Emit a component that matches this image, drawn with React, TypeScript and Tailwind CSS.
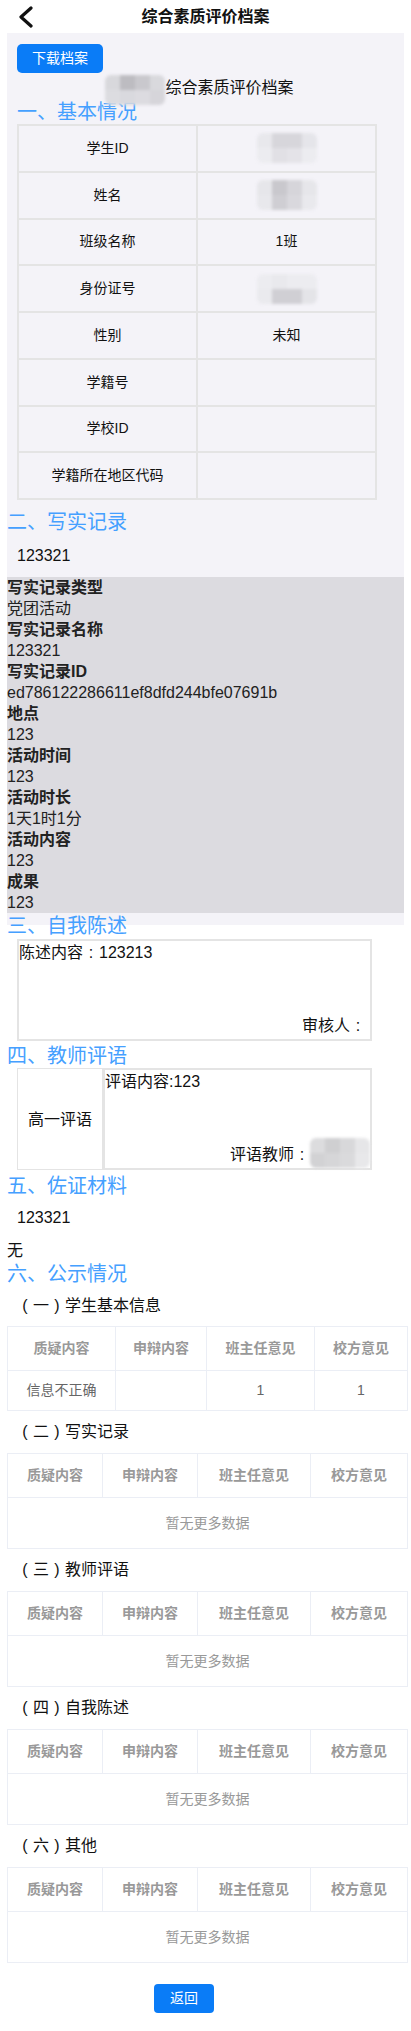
import type { ReactNode } from 'react'

const basicRows: { label: string; value?: string; blur?: string[] }[] = [
  { label: '学生ID', blur: ['#e8e8ec', '#d7d6db', '#d7d6db', '#e5e5ea', '#ececf0', '#e1e0e5', '#e4e3e8', '#ececf0'] },
  { label: '姓名', blur: ['#e6e6ea', '#c9c8cd', '#d6d5da', '#e6e6ea', '#e8e8ec', '#cfced3', '#d9d8dd', '#e9e9ed'] },
  { label: '班级名称', value: '1班' },
  { label: '身份证号', blur: ['#ececf0', '#e9e9ed', '#ececf0', '#ececf0', '#eaeaee', '#d0cfd4', '#d0cfd4', '#e4e4e8'] },
  { label: '性别', value: '未知' },
  { label: '学籍号' },
  { label: '学校ID' },
  { label: '学籍所在地区代码' },
]

const recordFields = [
  ['写实记录类型', '党团活动'],
  ['写实记录名称', '123321'],
  ['写实记录ID', 'ed786122286611ef8dfd244bfe07691b'],
  ['地点', '123'],
  ['活动时间', '123'],
  ['活动时长', '1天1时1分'],
  ['活动内容', '123'],
  ['成果', '123'],
]

const colsA = ['w-[108px]', 'w-[91px]', 'w-[108px]', 'w-[93px]']
const colsB = ['w-[95px]', 'w-[95px]', 'w-[113px]', 'w-[97px]']
const heads = ['质疑内容', '申辩内容', '班主任意见', '校方意见']

// full-width punctuation drawn centred in a 1em box, like the source font does
function Punct({ ch }: { ch: string }) {
  return <span className="inline-block w-[1em] text-center">{ch}</span>
}

// mosaic block standing in for blurred-out personal data
function Blur({ colors, className = '' }: { colors: string[]; className?: string }) {
  return (
    <div className={`grid grid-cols-4 blur-[1.5px] rounded-[6px] overflow-hidden ${className}`}>
      {colors.map((c, i) => (
        <div key={i} className="w-[15px] h-[15px]" style={{ backgroundColor: c }} />
      ))}
    </div>
  )
}

function Heading({ children, className = '' }: { children: ReactNode; className?: string }) {
  return <div className={`text-[20px] leading-[24px] text-[#45a0ff] ${className}`}>{children}</div>
}

function SubTitle({ num, title, first }: { num: string; title: string; first?: boolean }) {
  return (
    <div className={`${first ? 'h-[40px]' : 'h-[42px]'} flex items-center pl-[10px] text-[16px] text-[#111]`}>
      <Punct ch="(" />
      {num}
      <Punct ch=")" />
      {title}
    </div>
  )
}

function PublicTable({ cols, rows }: { cols: string[]; rows?: string[][] }) {
  return (
    <table className="w-full table-fixed border-collapse text-[14px]">
      <colgroup>
        {cols.map((c, i) => (
          <col key={i} className={c} />
        ))}
      </colgroup>
      <thead>
        <tr className="h-[44px]">
          {heads.map((h) => (
            <th key={h} className="border border-[#ebeef5] font-bold text-[#999] text-center">
              {h}
            </th>
          ))}
        </tr>
      </thead>
      <tbody>
        {rows ? (
          rows.map((r, i) => (
            <tr key={i} className="h-[40px]">
              {r.map((v, j) => (
                <td key={j} className="border border-[#ebeef5] text-[#666] text-center">
                  {v}
                </td>
              ))}
            </tr>
          ))
        ) : (
          <tr className="h-[51px]">
            <td colSpan={4} className="border border-[#ebeef5] text-[#999] text-center">
              暂无更多数据
            </td>
          </tr>
        )}
      </tbody>
    </table>
  )
}

export default function App() {
  return (
    <div className="w-[411px] bg-white text-[#111] font-['Liberation_Sans','Noto_Sans_CJK_SC',sans-serif]">
      {/* top bar */}
      <div className="h-[33px] flex items-center">
        <div className="w-[50px] pl-[17px]">
          <svg width="18" height="22" viewBox="0 0 18 22" fill="none">
            <path d="M14 2 L4 11 L14 20" stroke="#111" strokeWidth="3.2" strokeLinecap="round" strokeLinejoin="round" />
          </svg>
        </div>
        <div className="flex-1 text-center text-[16px] font-bold">综合素质评价档案</div>
        <div className="w-[50px]" />
      </div>

      <div className="px-[7px]">
        <div className="bg-[#f4f3f8] pt-[11px] pb-[12px]">
          <button className="ml-[10px] w-[86px] h-[29px] rounded-[5px] bg-[#0a7cf7] text-white text-[14px]">
            下载档案
          </button>
          <div className="mt-[2px] h-[25px] flex items-start justify-center pr-[12px]">
            <Blur
              className="shrink-0"
              colors={['#d8d8dc', '#bdbcc1', '#c9c8cd', '#d9d9dd', '#dcdce0', '#d9d9de', '#dcdbe0', '#d6d5da']}
            />
            <span className="text-[16px] leading-[22px] mt-[2px]">综合素质评价档案</span>
          </div>
          <Heading className="pl-[10px]">一、基本情况</Heading>

          <div className="ml-[10px] w-[360px] grid grid-cols-2 border border-[#e4e4e4] text-[14px]">
            {basicRows.map((r) => (
              <div key={r.label} className="contents">
                <div className="h-[46.75px] border border-[#e4e4e4] flex items-center justify-center">{r.label}</div>
                <div className="h-[46.75px] border border-[#e4e4e4] flex items-center justify-center">
                  {r.blur ? <Blur colors={r.blur} /> : r.value}
                </div>
              </div>
            ))}
          </div>

          <Heading className="mt-[10px]">二、写实记录</Heading>
          <div className="py-[11px] pl-[10px] text-[16px] leading-[21px]">123321</div>

          <div className="bg-[#dcdbe0] text-[16px] leading-[21px] text-[#222]">
            {recordFields.map(([k, v]) => (
              <div key={k}>
                <div className="font-bold">{k}</div>
                <div>{v}</div>
              </div>
            ))}
          </div>
        </div>

        <Heading className="-mt-[11px]">三、自我陈述</Heading>
        <div className="mt-[1px] ml-[10px] w-[355px] h-[102px] border-2 border-[#e4e4e4] flex flex-col justify-between text-[16px] leading-[21px] pt-[1px] pb-[3px] pr-[4px]">
          <div>
            陈述内容<Punct ch=":" />123213
          </div>
          <div className="text-right">
            审核人<Punct ch=":" />
          </div>
        </div>

        <Heading className="mt-[3px]">四、教师评语</Heading>
        <div className="ml-[10px] w-[355px] h-[102px] flex text-[16px] leading-[21px]">
          <div className="w-[86px] border border-[#e4e4e4] flex items-center justify-center">高一评语</div>
          <div className="flex-1 border-2 border-[#e4e4e4] flex flex-col justify-between">
            <div className="pt-[1px]">评语内容:123</div>
            <div className="flex items-end justify-end">
              <span className="mb-[3px]">
                评语教师<Punct ch=":" />
              </span>
              <Blur colors={['#dcdcde', '#cfcfd1', '#d8d8da', '#e6e6e8', '#d2d2d4', '#d6d6d8', '#dadadc', '#e8e8ea']} />
            </div>
          </div>
        </div>

        <Heading className="mt-[4px]">五、佐证材料</Heading>
        <div className="py-[9px] pl-[10px] text-[16px] leading-[21px]">123321</div>
        <div className="mt-[3px] text-[16px] leading-[21px]">无</div>
        <Heading className="mt-[1px]">六、公示情况</Heading>

        <SubTitle first num="一" title="学生基本信息" />
        <PublicTable cols={colsA} rows={[['信息不正确', '', '1', '1']]} />
        <SubTitle num="二" title="写实记录" />
        <PublicTable cols={colsB} />
        <SubTitle num="三" title="教师评语" />
        <PublicTable cols={colsB} />
        <SubTitle num="四" title="自我陈述" />
        <PublicTable cols={colsB} />
        <SubTitle num="六" title="其他" />
        <PublicTable cols={colsB} />

        <div className="pt-[21px] pb-[20px]">
          <button className="ml-[147px] w-[60px] h-[29px] rounded-[4px] bg-[#0a7cf7] text-white text-[14px]">返回</button>
        </div>
      </div>
      <div className="h-[3px] bg-[#eeeeee]" />
    </div>
  )
}
